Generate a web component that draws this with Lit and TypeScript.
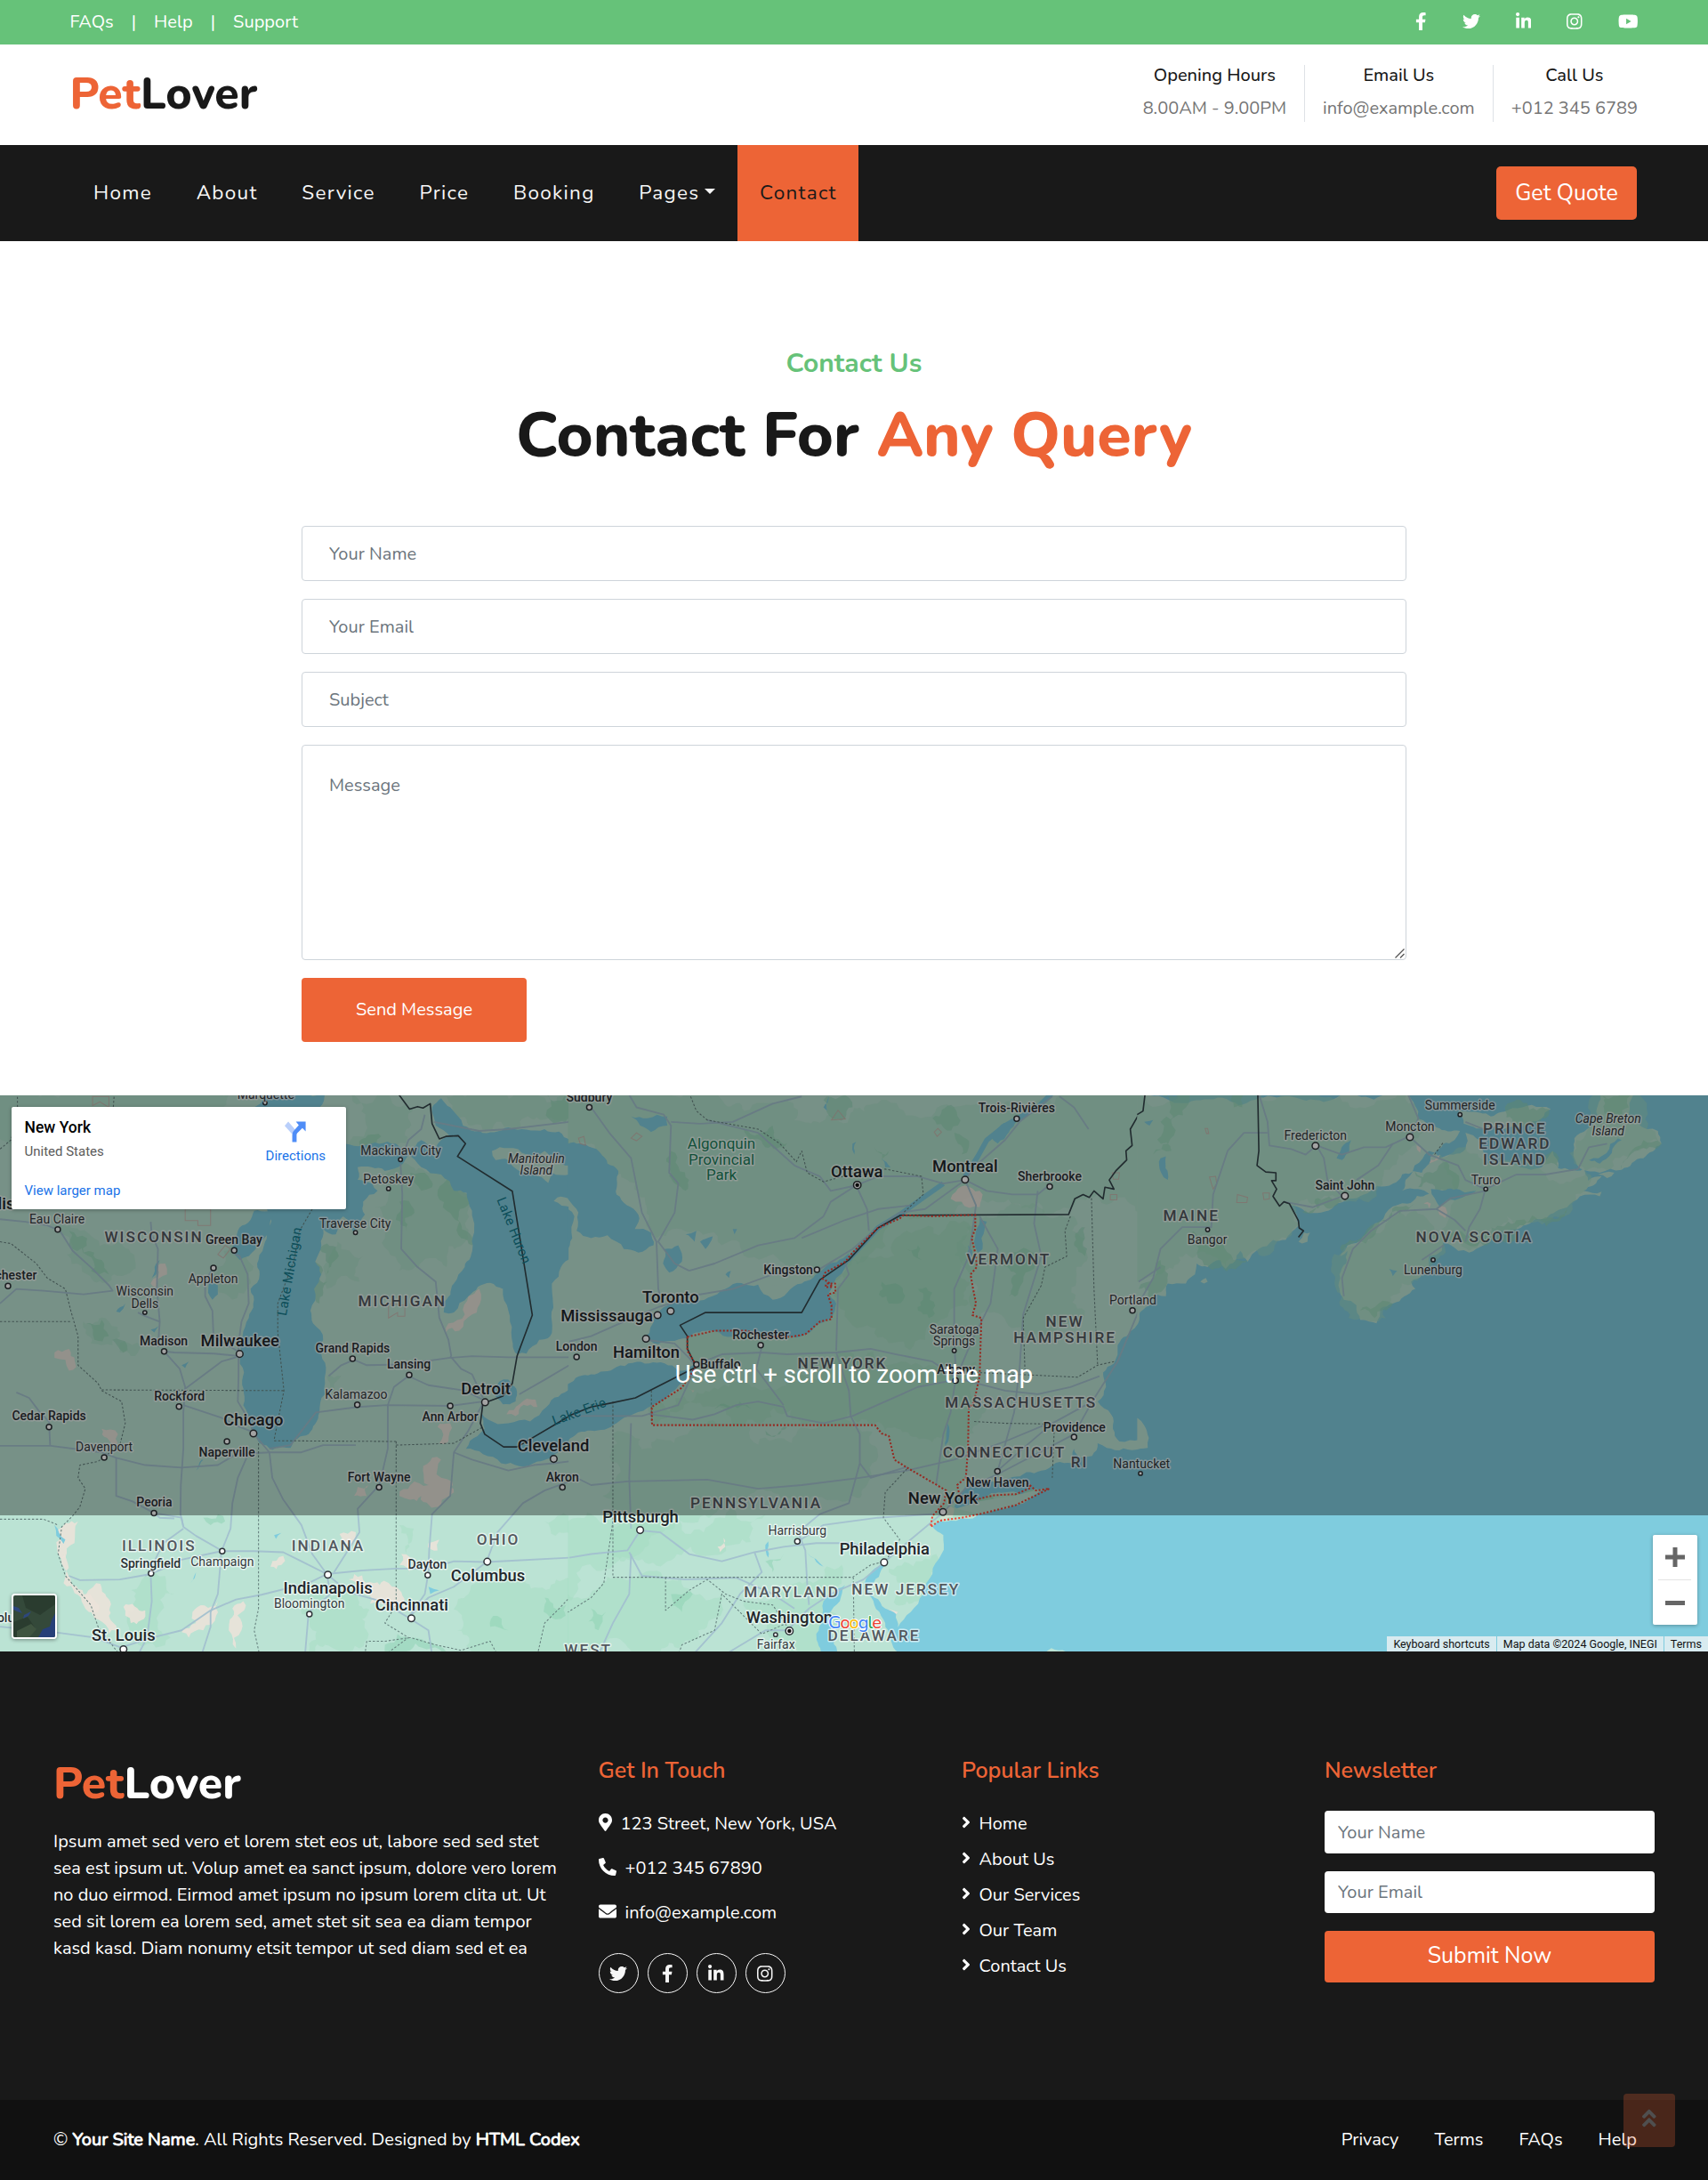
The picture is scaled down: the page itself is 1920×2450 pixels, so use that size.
import { LitElement, html, css, svg, nothing } from "lit";
import { customElement, property } from "lit/decorators.js";
import { classMap } from "lit/directives/class-map.js";

/* ---------- icons ---------- */

const ICONS: Record<string, [number, string]> = {
  facebook: [320, "M279.14 288l14.22-92.66h-88.91v-60.13c0-25.35 12.42-50.06 52.24-50.06h40.42V6.26S260.43 0 225.36 0c-73.22 0-121.08 44.38-121.08 124.72v70.62H22.89V288h81.39v224h100.17V288z"],
  twitter: [512, "M459.37 151.716c.325 4.548.325 9.097.325 13.645 0 138.72-105.583 298.558-298.558 298.558-59.452 0-114.68-17.219-161.137-47.106 8.447.974 16.568 1.299 25.34 1.299 49.055 0 94.213-16.568 130.274-44.832-46.132-.975-84.792-31.188-98.112-72.772 6.498.974 12.995 1.624 19.818 1.624 9.421 0 18.843-1.3 27.614-3.573-48.081-9.747-84.143-51.98-84.143-102.985v-1.299c13.969 7.797 30.214 12.67 47.431 13.319-28.264-18.843-46.781-51.005-46.781-87.391 0-19.492 5.197-37.36 14.294-52.954 51.655 63.675 129.3 105.258 216.365 109.807-1.624-7.797-2.599-15.918-2.599-24.04 0-57.828 46.782-104.934 104.934-104.934 30.213 0 57.502 12.67 76.67 33.137 23.715-4.548 46.456-13.32 66.599-25.34-7.798 24.366-24.366 44.833-46.132 57.827 21.117-2.273 41.584-8.122 60.426-16.243-14.292 20.791-32.161 39.308-52.628 54.253z"],
  linkedin: [448, "M100.28 448H7.4V148.9h92.88zM53.79 108.1C24.09 108.1 0 83.5 0 53.8a53.79 53.79 0 0 1 107.58 0c0 29.7-24.1 54.3-53.79 54.3zM447.9 448h-92.68V302.4c0-34.7-.7-79.2-48.29-79.2-48.29 0-55.69 37.7-55.69 76.7V448h-92.78V148.9h89.08v40.8h1.3c12.4-23.5 42.69-48.3 87.88-48.3 94 0 111.28 61.9 111.28 142.3V448z"],
  instagram: [448, "M224.1 141c-63.6 0-114.9 51.3-114.9 114.9s51.3 114.9 114.9 114.9S339 319.5 339 255.9 287.7 141 224.1 141zm0 189.6c-41.1 0-74.7-33.5-74.7-74.7s33.5-74.7 74.7-74.7 74.7 33.5 74.7 74.7-33.6 74.7-74.7 74.7zm146.4-194.3c0 14.9-12 26.8-26.8 26.8-14.9 0-26.8-12-26.8-26.8s12-26.8 26.8-26.8 26.8 12 26.8 26.8zm76.1 27.2c-1.7-35.9-9.9-67.7-36.2-93.9-26.2-26.2-58-34.4-93.9-36.2-37-2.1-147.9-2.1-184.9 0-35.8 1.7-67.6 9.9-93.9 36.1s-34.4 58-36.2 93.9c-2.1 37-2.1 147.9 0 184.9 1.7 35.9 9.9 67.7 36.2 93.9s58 34.4 93.9 36.2c37 2.1 147.9 2.1 184.9 0 35.9-1.7 67.7-9.9 93.9-36.2 26.2-26.2 34.4-58 36.2-93.9 2.1-37 2.1-147.8 0-184.8zM398.8 388c-7.8 19.6-22.9 34.7-42.6 42.6-29.5 11.7-99.5 9-132.1 9s-102.7 2.6-132.1-9c-19.6-7.8-34.7-22.9-42.6-42.6-11.7-29.5-9-99.5-9-132.1s-2.6-102.7 9-132.1c7.8-19.6 22.9-34.7 42.6-42.6 29.5-11.7 99.5-9 132.1-9s102.7-2.6 132.1 9c19.6 7.8 34.7 22.9 42.6 42.6 11.7 29.5 9 99.5 9 132.1s2.7 102.7-9 132.1z"],
  youtube: [576, "M549.655 124.083c-6.281-23.65-24.787-42.276-48.284-48.597C458.781 64 288 64 288 64S117.22 64 74.629 75.486c-23.497 6.322-42.003 24.947-48.284 48.597-11.412 42.867-11.412 132.305-11.412 132.305s0 89.438 11.412 132.305c6.281 23.65 24.787 41.5 48.284 47.821C117.22 448 288 448 288 448s170.78 0 213.371-11.486c23.497-6.321 42.003-24.171 48.284-47.821 11.412-42.867 11.412-132.305 11.412-132.305s0-89.438-11.412-132.305zm-317.51 213.508V175.185l142.739 81.205-142.739 81.201z"],
  pin: [384, "M172.268 501.67C26.97 291.031 0 269.413 0 192 0 85.961 85.961 0 192 0s192 85.961 192 192c0 77.413-26.97 99.031-172.268 309.67-9.535 13.774-29.93 13.773-39.464 0zM192 272c44.183 0 80-35.817 80-80s-35.817-80-80-80-80 35.817-80 80 35.817 80 80 80z"],
  phone: [512, "M493.4 24.6l-104-24c-11.3-2.6-22.9 3.3-27.5 13.9l-48 112c-4.2 9.8-1.4 21.3 6.9 28l60.6 49.6c-36 76.7-98.9 140.5-177.2 177.2l-49.6-60.6c-6.8-8.3-18.2-11.1-28-6.9l-112 48C3.9 366.5-2 378.1.6 389.4l24 104C27.1 504.2 36.7 512 48 512c256.1 0 464-207.5 464-464 0-11.2-7.7-20.9-18.6-23.4z"],
  mail: [512, "M502.3 190.8c3.9-3.1 9.7-.2 9.7 4.7V400c0 26.5-21.5 48-48 48H48c-26.5 0-48-21.5-48-48V195.6c0-5 5.7-7.8 9.7-4.7 22.4 17.4 52.1 39.5 154.1 113.6 21.1 15.4 56.7 47.8 92.2 47.6 35.7.3 72-32.8 92.3-47.6 102-74.1 131.6-96.3 154-113.7zM256 320c23.2.4 56.6-29.2 73.4-41.4 132.7-96.3 142.8-104.7 173.4-128.7 5.8-4.5 9.2-11.5 9.2-18.9v-19c0-26.5-21.5-48-48-48H48c-26.5 0-48 21.5-48 48v19c0 7.4 3.4 14.3 9.2 18.9 30.6 23.9 40.7 32.4 173.4 128.7 16.8 12.2 50.2 41.8 73.4 41.4z"],
  angle: [256, "M224.3 273l-136 136c-9.4 9.4-24.6 9.4-33.9 0l-22.6-22.6c-9.4-9.4-9.4-24.6 0-33.9l96.4-96.4-96.4-96.4c-9.4-9.4-9.4-24.6 0-33.9L54.3 103c9.4-9.4 24.6-9.4 33.9 0l136 136c9.5 9.4 9.5 24.6.1 34z"],
  up: [320, "M177 255.7l136 136c9.4 9.4 9.4 24.6 0 33.9l-22.6 22.6c-9.4 9.4-24.6 9.4-33.9 0L160 351.9l-96.4 96.4c-9.4 9.4-24.6 9.4-33.9 0L7 425.7c-9.4-9.4-9.4-24.6 0-33.9l136-136c9.4-9.5 24.6-9.5 34-.1zm-34-192L7 199.7c-9.4 9.4-9.4 24.6 0 33.9l22.6 22.6c9.4 9.4 24.6 9.4 33.9 0l96.4-96.4 96.4 96.4c9.4 9.4 24.6 9.4 33.9 0l22.6-22.6c9.4-9.4 9.4-24.6 0-33.9l-136-136c-9.2-9.4-24.4-9.4-33.8 0z"],
};

@customElement("fa-icon")
export class FaIcon extends LitElement {
  @property() name = "";
  static styles = css`
    :host { display: inline-flex; flex: none; }
    svg { display: block; height: 1em; fill: currentColor; }
  `;
  render() {
    const [w, d] = ICONS[this.name];
    return html`<svg viewBox="0 0 ${w} 512">${svg`<path d=${d} transform=${this.name === "phone" ? "matrix(-1 0 0 1 512 0)" : "matrix(1 0 0 1 0 0)"}></path>`}</svg>`;
  }
}

/* ---------- map ----------
   Geometry is stored per sheet; three sheets of 1568 units lie side by side,
   each of them 640 px wide. */

const K = 640 / 1568;
const OFF_Y = -11;

/* Breaks long straight edges into an irregular shoreline. */
function rough(points: string, amount = 0.16): string {
  const pts = points.split(" ").map((p) => p.split(",").map(Number));
  const out: number[][] = [];
  const noise = (a: number, b: number) => {
    const v = Math.sin(a * 12.9898 + b * 78.233) * 43758.5453;
    return (v - Math.floor(v)) * 2 - 1;
  };
  const split = (a: number[], b: number[]) => {
    const dx = b[0] - a[0], dy = b[1] - a[1], len = Math.hypot(dx, dy);
    const onEdge = (a[0] < 0 && b[0] < 0) || (a[0] >= 1568 && b[0] >= 1568);
    if (len < 16 || onEdge) { out.push(a); return; }
    const k = noise(a[0] + b[0], a[1] + b[1]) * amount * Math.min(1, 160 / len);
    const m = [(a[0] + b[0]) / 2 - dy * k, (a[1] + b[1]) / 2 + dx * k];
    split(a, m);
    split(m, b);
  };
  pts.forEach((p, i) => split(p, pts[(i + 1) % pts.length]));
  return out.map((p) => `${p[0].toFixed(1)},${p[1].toFixed(1)}`).join(" ");
}

const WATER: string[][] = [
  [
    // Lake Superior edge
    "760,20 895,20 880,60 800,60 740,75 700,60",
    // Lake Michigan
    "735,338 745,365 730,430 712,480 715,520 690,560 685,640 668,690 663,740 672,790 670,880 690,940 715,985 750,1003 800,998 850,960 880,900 895,850 897,790 885,740 890,700 862,655 855,620 865,560 885,520 868,485 885,440 890,395 925,410 945,360 975,405 1005,355 1000,320 1040,290 1025,270 985,260 985,225 1060,235 1110,215 1130,190 1090,160 1000,165 950,160 900,338",
    "640,445 655,400 700,345 775,338 745,370 715,430 685,470 660,480",
    // Lake Huron
    "1125,180 1160,225 1215,245 1250,290 1285,295 1300,345 1302,440 1280,500 1250,545 1217,598 1222,625 1250,625 1290,580 1350,543 1385,560 1400,620 1408,680 1425,740 1450,738 1485,700 1515,690 1520,650 1520,545 1545,500 1572,470 1572,335 1525,318 1535,308 1572,312 1572,150 1500,120 1400,115 1320,125 1275,110 1240,60 1215,35 1190,60 1200,110 1240,140 1200,170 1160,150",
    // Lake St. Clair
    "1355,835 1375,815 1400,810 1422,835 1420,870 1385,878 1368,860",
    // Lake Erie
    "1283,1000 1315,965 1335,945 1325,900 1345,920 1400,930 1460,925 1505,885 1572,830 1572,985 1540,1005 1480,1035 1430,1048 1380,1040 1330,1015",
    "575,545 600,550 600,575 585,590 573,570", "440,480 430,520 418,530 430,490", "500,770 520,760 510,778", "730,20 720,40 760,30",
    "150,1210 180,1250 175,1262 155,1240", "385,90 370,110 362,104", "230,110 240,95 236,120", "345,600 330,625 320,622", "540,1340 525,1370 535,1350", "1180,1380 1210,1390 1185,1400", "755,1238 775,1232 760,1248", "415,672 437,662 425,680", "540,1060 555,1030 560,1030",
  ],
  [
    // Georgian Bay
    "-4,160 60,170 85,185 105,215 135,235 130,300 190,355 180,395 225,405 232,440 190,460 150,450 105,412 60,420 20,400 25,350 -4,312",
    "-4,340 14,360 8,420 -4,460",
    // Lake Ontario
    "200,700 230,655 260,610 330,590 430,560 520,548 560,590 600,570 640,545 700,505 770,462 760,500 735,530 715,570 735,600 722,640 690,655 650,685 600,693 500,682 400,676 335,690 290,703 245,712",
    // Lake Erie
    "-4,822 60,795 130,775 220,765 300,785 345,768 330,805 280,845 230,880 175,905 130,930 60,950 -4,978",
    // Lake Simcoe, Nipissing
    "262,450 300,440 310,485 275,515 258,490", "170,85 215,90 270,85 270,110 225,128 195,110",
    // Champlain
    "1130,365 1150,375 1135,420 1138,450 1125,460 1120,400", "1098,440 1110,455 1108,495 1100,480", "1038,960 1042,930 1038,1010",
    // Atlantic
    "1572,640 1535,690 1510,715 1500,765 1470,790 1478,830 1455,870 1492,905 1497,945 1515,980 1572,975 1572,1000 1480,998 1455,985 1440,1020 1410,1025 1390,1000 1385,1040 1300,1060 1220,1078 1140,1085 1090,1105 1070,1140 1060,1160 1070,1166 1130,1140 1200,1120 1290,1110 1250,1150 1160,1175 1080,1192 1020,1200 1000,1215 1030,1238 1025,1290 1000,1345 975,1400 940,1450 905,1492 900,1455 870,1440 840,1410 820,1385 815,1395 840,1430 865,1470 880,1510 920,1575 1572,1575",
    "700,1420 740,1385 760,1375 745,1420 715,1455 720,1500 740,1575 690,1575 680,1510 700,1470", "835,1335 870,1318 820,1375 810,1390",
    "360,430 395,415 375,450", "320,410 350,400 345,430", "430,520 445,510 440,530", "450,395 455,410 462,395", "860,200 885,225 870,225", "780,160 790,155 785,190", "1160,140 1215,100 1235,95 1180,160", "700,60 715,30 710,70", "655,1285 700,1325 690,1320", "540,1265 548,1255 548,1300",
  ],
  [],
];

const OCEAN_LAND: string[] = [
  "-4,20 740,20 770,92 820,115 885,125 870,150 815,185 830,200 900,175 900,130 940,150 960,215 1050,225 1110,225 1140,180 1155,228 1225,228 1238,262 1275,250 1225,290 1275,292 1270,305 1215,305 1180,335 1060,385 990,400 950,440 910,460 880,455 840,430 835,455 800,470 800,495 750,540 762,560 700,600 665,615 655,655 635,650 610,645 600,605 565,590 553,560 553,520 575,455 555,470 575,440 650,380 740,325 800,298 770,285 725,290 735,260 760,232 700,270 620,300 540,330 460,348 415,330 445,385 420,405 405,425 370,425 330,450 300,485 280,455 240,505 225,480 190,500 160,490 155,520 130,545 80,545 75,580 50,575 20,610 -4,640",
  "1275,20 1365,20 1350,80 1400,120 1430,125 1440,160 1390,200 1330,232 1270,240 1215,228 1198,180 1200,145 1262,90",
  "880,70 940,75 970,85 1030,62 1135,65 1110,90 1060,110 990,118 930,118 895,105",
  "-4,915 15,935 28,970 25,998 -4,1000",
  "440,430 455,405 472,405 465,430 450,435", "170,540 185,530 190,540 180,545", "1265,245 1280,240 1310,240 1290,255",
];
const OCEAN_INLETS = ["760,220 800,180 815,185 800,215 780,240 755,235", "805,285 930,290 850,315 830,335 815,310", "1240,205 1320,145 1330,150 1270,215", "545,200 585,150 580,180 560,205", "60,200 75,195 80,260 62,240", "690,505 712,510 700,525", "15,100 40,95 30,110"];

const FOREST: string[][] = [
  [
    "-4,20 640,20 600,60 480,60 -4,130", "160,390 220,400 300,440 330,430 360,460 350,520 300,540 240,520 200,440", "230,650 290,640 330,680 310,715 250,710", "340,705 390,715 360,745 330,735", "1060,250 1180,240 1260,290 1290,340 1290,420 1230,500 1100,510 1060,420", "930,430 1000,470 990,540 900,560 890,500", "1230,30 1572,20 1572,115 1380,100 1300,110", "960,165 1130,100 1140,60 1060,20 960,20",
    "1290,1400 1440,1350 1572,1360 1572,1560 1300,1560 1260,1500", "850,1420 980,1400 1010,1500 960,1560 850,1560", "400,1350 480,1400 470,1520 380,1540", "1100,1210 1140,1220 1120,1290", "900,800 940,800 930,850 905,840", "600,500 660,440 690,490 680,560 640,590", "1500,1200 1572,1180 1572,1240 1530,1240",
  ],
  [
    "-4,20 1572,20 1572,350 920,355 780,480 600,500 420,440 240,420 190,300 60,160 -4,160", "820,470 930,400 1100,380 1100,600 980,700 820,660 740,600 750,520", "1120,360 1390,360 1420,620 1260,700 1130,640", "220,880 740,730 1120,760 1090,1000 840,930 230,930", "120,960 780,940 820,1100 620,1160 300,1180 120,1300", "-4,1200 200,1180 540,1180 420,1290 100,1330 -4,1420", "-4,1400 260,1360 420,1400 250,1560 -4,1570", "750,1320 640,1560 540,1570 480,1420", "880,1330 970,1310 1010,1290 960,1420 900,1430",
  ],
  [
    "-4,20 740,20 780,120 700,220 560,310 430,330 410,420 240,500 -4,540", "1270,20 1365,20 1400,120 1430,150 1300,230 1210,220 1205,150", "830,190 960,215 1230,235 1230,290 1060,385 910,455 840,420 860,330", "560,460 760,340 840,420 780,510 690,600 640,650 560,580",
  ],
];
const DEEP: string[][] = [
  ["190,400 240,420 230,460 280,480 300,520 250,510 200,450", "235,655 280,645 300,690 260,700", "1100,320 1140,340 1120,400 1090,370", "1130,240 1180,250 1190,280 1160,290", "880,450 930,460 900,520", "310,700 350,715 340,735", "990,165 1050,140 1040,190", "1500,1410 1560,1430 1530,1470", "1370,1460 1400,1500 1350,1490", "560,1190 600,1180 620,1200 580,1210", "1230,260 1290,310 1300,440 1270,420", "1572,20 1500,20 1540,100 1572,90", "850,555 885,520 868,485 880,600", "1060,1540 1140,1520 1230,1560 1060,1565"],
  ["860,540 910,550 920,590 880,600", "930,450 960,440 970,480", "960,560 1000,570 990,640 960,620", "480,120 560,110 600,160 540,170", "280,180 330,260 320,290 280,240", "1190,470 1290,460 1250,540 1210,580", "1390,440 1420,390 1420,470", "840,170 880,180 860,210", "1060,130 1100,170 1080,190", "540,1310 590,1290 560,1340", "540,950 600,940 580,960", "400,890 470,870 500,890", "60,1440 100,1450 80,1500", "280,1400 340,1400 310,1450", "700,40 780,60 760,90", "1000,90 1060,60 1070,110", "1280,1110 1220,1130 1100,1160 1140,1170"],
  ["60,20 140,20 130,60 60,100 90,180 40,190", "150,400 240,420 300,480 180,495", "0,560 60,480 70,560 40,590", "820,410 960,440 1060,385 1180,340 1050,370 930,410", "1100,225 1140,180 1155,228", "1275,20 1365,20 1350,60 1290,80", "1010,70 1130,65 1110,90", "555,465 640,385 760,325 740,345 600,430", "610,620 650,640 700,600 650,610", "265,20 290,20 285,60 262,60", "760,235 850,210 880,280 770,280", "1330,232 1440,160 1390,150 1350,190", "440,345 500,330 560,320 480,350"],
];
const SAND: string[][] = [
  ["1320,560 1325,590 1300,630 1265,675 1228,680 1235,655 1280,630 1290,580", "430,500 455,490 460,520 430,555 415,545", "150,735 190,725 195,745 210,775 190,785 180,755 150,750", "280,945 325,960 325,985 295,970", "1395,905 1475,865 1480,885 1420,910", "1165,1060 1190,1025 1215,1030 1215,1080 1245,1090 1250,1120 1215,1155 1160,1130 1100,1130 1130,1100 1180,1100", "985,1105 1015,1100 1010,1130 975,1130", "1205,940 1240,930 1235,980 1210,985", "180,1205 215,1200 205,1260 180,1300 160,1290 165,1250", "165,1290 180,1290 185,1340 230,1400 270,1450 230,1430 175,1370", "265,1370 290,1400 300,1460 320,1500 300,1510 270,1470 240,1420", "340,1435 400,1445 360,1480", "530,1450 600,1420 595,1460 560,1500 520,1520 500,1505 540,1480", "640,1440 670,1420 665,1500 650,1550 630,1500", "740,1300 780,1295 775,1320 745,1325", "935,1235 980,1230 975,1260 940,1260", "1105,1290 1130,1300 1125,1350 1100,1320", "1180,1260 1210,1250 1205,1280", "960,1360 1030,1370 1080,1380 1120,1440 1060,1430 1000,1390"],
  ["1055,300 1130,290 1130,335 1080,320 1050,312", "408,1270 425,1245 430,1270 415,1285", "325,835 345,840 340,845", "855,1455 905,1450 900,1470 880,1480", "1030,1170 1060,1165 1055,1190 1020,1195"],
  ["830,330 850,350 845,365 828,355", "785,325 805,325 800,338", "765,165 778,170 775,185", "785,205 830,190 815,205"],
];
const PARKS: string[][] = [
  ["255,30 300,30 300,60 275,45 255,55", "510,340 580,340 580,385 545,385 545,372 510,372", "1070,600 1115,605 1115,635 1095,635 1095,625 1070,640", "600,465 620,440 635,450 615,475"],
  ["740,68 760,92 722,95", "1005,128 1015,118 1025,128 1013,140", "1490,300 1508,300 1508,315 1490,315", "1495,240 1515,240 1513,258 1498,258", "25,145 40,140 45,165 30,160", "170,145 185,130 200,140 185,152"],
  ["195,252 212,250 215,270 205,285", "272,300 300,308 298,322 270,322", "342,296 360,296 360,312 345,314", "183,118 190,118 193,132 187,132"],
];

const ROADS: string[][] = [
  [
    "0,368 70,375 130,385 165,400 200,455 250,500 300,550 310,565 230,575 120,565 45,560 0,600", "415,375 418,410 435,450 432,560 440,650 435,720", "640,460 660,470 682,520 685,600 665,650 657,710 657,800 655,870 685,920 700,960 742,1010", "588,500 565,540 565,580 585,620 588,690 660,735",
    "440,650 400,635 380,625", "452,732 480,735 590,738 660,745", "452,732 495,780 510,830 505,900 505,1000 498,1100 497,1180 505,1215", "510,835 570,790 610,760 660,745", "505,880 610,915 660,940 700,955", "45,845 80,860 110,900 135,925 138,990", "0,992 140,992 280,1010 320,1025 400,1045 500,1052 600,1045 650,1015 742,1010", "320,1025 320,1130 365,1145 424,1177 500,1190 505,1215 540,1240 610,1280",
    "424,1177 440,1190 480,1192", "505,1220 450,1260 430,1300 415,1340 400,1350", "190,1350 220,1362 330,1360 415,1345 450,1330 480,1310 610,1282 700,1282 780,1285 830,1310 900,1345", "610,1282 600,1400 580,1450 580,1490 555,1568", "610,1282 635,1220 640,1150 655,1080 690,1000", "415,1345 418,1420 405,1520 380,1568", "340,1545 420,1520 500,1500 580,1445 650,1415 720,1402 850,1370 900,1345",
    "900,1345 860,1290 830,1210 780,1140 750,1080 742,1010 830,1010 890,990 980,990", "742,1000 800,990 870,900 985,885 1065,880 1240,882 1330,870", "905,800 940,770 975,755 1010,770 1110,768 1235,750 1300,745 1400,748 1568,748", "1125,800 1085,830 1068,880 1068,1000 1045,1100 985,1165 990,1230 920,1340", "1125,800 1180,825 1280,840 1330,865", "1240,745 1270,780 1300,795 1330,860", "1105,205 1125,150 1160,120 1170,80", "1103,215 1108,300 1105,450 1150,500 1200,540 1210,640 1235,700 1243,745",
    "900,1345 1000,1335 1090,1330 1180,1330 1250,1310 1340,1312 1568,1300", "900,1345 960,1395 1050,1420 1125,1465", "1125,1465 1170,1400 1180,1340 1182,1280 1190,1180 1240,1130 1250,1010 1290,950 1330,875", "1125,1465 1180,1410 1250,1380 1340,1312", "1340,1312 1370,1230 1440,1150 1500,1115 1568,1090", "1250,1010 1300,1030 1400,1060 1470,1045 1525,1040 1568,1035", "0,1490 150,1505 260,1520 340,1550", "1125,1465 1180,1500 1190,1568", "1195,100 1320,125 1400,120 1568,100", "1430,850 1500,810 1568,770", "900,1345 910,1400 850,1450 840,1568",
  ],
  [
    "60,60 110,130 170,200 200,350 240,430 245,560 255,600", "150,0 185,60 260,80 280,110 275,240 300,270 290,350 245,430 290,490 330,510", "280,100 360,105 450,100 560,50 640,30", "330,510 400,490 520,440 620,420 700,360 720,320 790,275", "0,705 60,690 150,650 245,610 280,600 330,580 450,560 560,520 690,505 780,450 850,390 910,350 980,340 1090,260", "790,275 850,250 960,250 1030,270 1090,260 1120,220 1200,150 1240,100 1330,30", "1090,260 1150,290 1220,300 1290,300 1320,275", "790,275 720,290 690,250 620,220 520,130 380,95", "790,275 820,340 825,400", "1090,260 1120,330 1110,400 1100,470 1060,560 1060,700 1065,800 1050,900 1030,960 1010,1100",
    "760,490 770,520 740,560 735,730", "210,700 290,710 330,750 345,770", "345,770 420,740 530,735 600,740 735,735 830,725 900,740 1000,760 1065,805", "735,735 770,840 775,910 800,960 800,1040 770,1150 690,1180 630,1230", "0,910 200,910 300,880 350,770", "220,905 340,920 400,905 460,880 520,870 590,885 600,910 700,930 780,910 870,870 960,830 1065,810", "530,720 515,780 590,880", "1065,805 1200,840 1290,850 1380,830 1460,800", "1065,805 1110,700 1160,600 1180,450 1130,360",
    "1290,290 1280,380 1300,470 1250,630 1240,780 1225,900 1180,1060", "1390,960 1440,870 1510,760 1568,620", "1180,1060 1260,990 1330,930 1440,870", "0,1070 60,1100 160,1090 380,1085 520,1110 640,1100 800,1080 930,1060 1060,1030 1200,980 1320,930", "800,1040 830,1080 930,1050", "170,930 165,1080 170,1220", "0,1300 60,1290 160,1280 195,1225 250,1230 330,1290 420,1310 510,1285 590,1270 680,1260 780,1260 870,1290", "630,1230 650,1280 655,1370 660,1430", "870,1310 810,1360 720,1400 660,1440 600,1500", "870,1310 940,1250 1030,1175", "630,1255 700,1210 850,1190 1000,1180", "165,1285 200,1350 320,1360 460,1355 560,1400 620,1440", "170,1290 165,1400 120,1480 80,1568", "510,1285 530,1340 470,1400 420,1480 340,1568", "600,1500 540,1500 440,1560", "1030,1175 1090,1110 1180,1070 1390,960", "1430,120 1390,60 1350,30", "640,420 760,370 850,340 940,330",
  ],
  [
    "330,20 355,100 360,165 420,175 460,190 490,165", "490,165 510,200 520,260 560,305 480,335 400,320", "490,165 560,190 620,170 680,170 745,140 800,190 880,220 900,260 955,285", "700,160 660,220 600,260", "740,20 770,90 750,140", "955,285 1040,245 1120,245 1210,230 1240,170 1290,160", "955,285 940,340 910,390 900,430", "955,290 860,310 820,340 720,345 640,400 590,450 560,530 565,580", "820,340 870,370 900,400", "355,130 290,130 245,180 205,300 200,390 120,390 60,450 40,530 0,600", "900,100 950,120 1010,110", "840,440 780,480", "0,540 60,500",
  ],
];

const STATES: string[][] = [
  ["48,20 48,90 30,150 0,175", "0,430 30,435 100,490 130,530 180,560 195,620 215,690 215,770 270,820 280,840 335,870 345,930 330,990 270,1035 220,1045 215,1080 235,1110 220,1160 200,1185 170,1215 160,1290 180,1350 250,1430 270,1490 330,1568", "0,650 195,650", "280,838 782,840", "860,340 825,400 810,480 765,600 765,680 782,840 755,975", "712,985 712,1440 700,1500 715,1568", "755,978 1091,980", "1091,980 1091,1430 1060,1480 1125,1520 1060,1568", "1091,990 1250,985 1330,940", "0,1194 120,1194 160,1210", "1005,1568 1010,1530 1060,1530 1130,1520 1200,1540 1270,1555 1350,1530 1370,1568", "1480,1568 1500,1480 1540,1440 1568,1410", "315,20 312,60"],
  ["330,20 350,70 380,95 520,120 580,160 625,210 640,180 655,240 700,265 790,240 870,230 970,250 975,300 920,350", "1438,310 1445,560 1455,770", "1380,360 1365,400 1370,470 1310,500 1300,550 1250,640 1255,790", "1120,790 1400,803 1455,770 1500,760", "1115,925 1200,930 1335,932 1335,960 1330,1080", "120,870 120,1354 780,1354 830,1320 870,1310", "226,840 226,930", "265,1354 265,1445 330,1390 380,1360 430,1400 480,1420 560,1430 600,1490", "782,1354 785,1568", "120,1200 95,1370 60,1410 -4,1450", "930,1055 870,1120 865,1190 910,1250 870,1310", "600,1480 530,1510 420,1400 400,1500 310,1540 300,1568"],
  ["815,190 840,155"],
];
const BORDERS: string[][] = [
  ["1095,20 1128,65 1150,58 1165,62 1185,50 1190,105 1210,147 1228,140 1262,138 1282,160 1260,195 1411,291 1466,632 1424,745 1411,820 1385,855 1330,875 1323,930 1335,960 1387,995 1424,995 1568,910"],
  ["-4,910 60,885 120,873 182,860 300,800 350,775 325,725 325,690 305,660 375,625 640,625 690,535 770,480 850,392 912,357 1375,355 1392,312 1415,300 1432,308 1445,290 1470,312 1475,280 1500,285 1487,260 1505,235 1535,205 1533,180 1550,165 1545,120 1568,80"],
  ["-4,80 12,70 18,20", "328,20 331,180 326,220 350,238 378,240 378,262 366,262 380,285 370,305 388,332 400,320 415,325 440,372 442,392 454,400 440,418"],
];
const NY = "325,692 400,675 490,675 530,690 610,692 650,685 690,650 722,643 722,605 712,575 733,570 732,545 708,545 705,555 725,555 712,540 697,532 705,515 760,485 780,460 850,392 910,366 920,357 1000,360 1118,356 1118,395 1108,420 1120,470 1122,500 1105,520 1112,560 1120,600 1110,632 1135,640 1133,700 1130,800 1115,870 1100,890 1098,1000 1092,1080 1068,1100 1075,1130 1120,1140 1170,1128 1230,1125 1270,1108 1262,1095 1285,1115 1322,1110 1230,1155 1130,1180 1080,1190 1020,1198 995,1215 1000,1185 1032,1150 1038,1115 930,1052 895,1030 880,965 860,958 842,935 228,935 227,885 310,832 335,795 350,770 325,730 325,692";

/* kind, sheet, centre x, baseline y, lines */
type Label = [string, number, number, number, string];
const LABELS: Label[] = [
  ["s", 0, 732, 36, "Marquette"], ["s", 0, 1104, 191, "Mackinaw City"], ["i", 0, 1477, 213, "Manitoulin|Island"], ["s", 0, 1070, 270, "Petoskey"], ["b", 0, 17, 340, "lis"],
  ["s", 0, 157, 379, "Eau Claire"], ["st", 0, 424, 432, "WISCONSIN"], ["m", 0, 644, 437, "Green Bay"], ["s", 0, 978, 392, "Traverse City"], ["m", 0, 44, 535, "chester"],
  ["s", 0, 587, 545, "Appleton"], ["s", 0, 399, 578, "Wisconsin|Dells"], ["st", 0, 1108, 607, "MICHIGAN"], ["m", 0, 451, 715, "Madison"], ["b", 0, 661, 718, "Milwaukee"],
  ["m", 0, 971, 735, "Grand Rapids"], ["m", 0, 1126, 780, "Lansing"], ["b", 0, 1338, 851, "Detroit"], ["m", 0, 494, 868, "Rockford"], ["s", 0, 981, 863, "Kalamazoo"],
  ["m", 0, 135, 922, "Cedar Rapids"], ["b", 0, 698, 937, "Chicago"], ["m", 0, 1240, 924, "Ann Arbor"], ["s", 0, 287, 1007, "Davenport"], ["m", 0, 625, 1022, "Naperville"],
  ["b", 0, 1524, 1007, "Cleveland"], ["m", 0, 1044, 1090, "Fort Wayne"], ["m", 0, 1549, 1090, "Akron"], ["m", 0, 425, 1160, "Peoria"], ["st", 0, 438, 1282, "ILLINOIS"],
  ["st", 0, 904, 1282, "INDIANA"], ["st", 0, 1372, 1265, "OHIO"], ["m", 0, 415, 1327, "Springfield"], ["s", 0, 612, 1324, "Champaign"], ["m", 0, 1177, 1331, "Dayton"],
  ["b", 0, 1344, 1364, "Columbus"], ["b", 0, 903, 1399, "Indianapolis"], ["s", 0, 852, 1439, "Bloomington"], ["b", 0, 1134, 1445, "Cincinnati"], ["b", 0, 340, 1530, "St. Louis"], ["m", 0, 16, 1477, "olu"],
  ["m", 1, 55, 44, "Sudbury"], ["m", 1, 1232, 74, "Trois-Rivières"], ["p", 1, 419, 174, "Algonquin|Provincial|Park"], ["b", 1, 792, 252, "Ottawa"], ["b", 1, 1090, 238, "Montreal"],
  ["m", 1, 1323, 262, "Sherbrooke"], ["m", 1, 603, 519, "Kingston"], ["st", 1, 1210, 493, "VERMONT"], ["b", 1, 279, 599, "Toronto"], ["b", 1, 103, 649, "Mississauga"],
  ["s", 1, 1552, 602, "Portland"], ["st", 1, 1365, 665, "NEW|HAMPSHIRE"], ["s", 1, 1060, 683, "Saratoga|Springs"], ["m", 1, 527, 699, "Rochester"], ["m", 1, 20, 731, "London"],
  ["b", 1, 212, 750, "Hamilton"], ["m", 1, 416, 780, "Buffalo"], ["st", 1, 752, 780, "NEW YORK"], ["m", 1, 1065, 794, "Albany"], ["st", 1, 1244, 888, "MASSACHUSETTS"],
  ["m", 1, 1391, 952, "Providence"], ["st", 1, 1198, 1023, "CONNECTICUT"], ["st", 1, 1405, 1050, "RI"], ["m", 1, 1179, 1104, "New Haven"], ["b", 1, 1029, 1152, "New York"],
  ["st", 1, 515, 1163, "PENNSYLVANIA"], ["b", 1, 196, 1203, "Pittsburgh"], ["s", 1, 628, 1238, "Harrisburg"], ["b", 1, 868, 1292, "Philadelphia"], ["st", 1, 613, 1408, "MARYLAND"],
  ["st", 1, 927, 1401, "NEW JERSEY"], ["b", 1, 606, 1479, "Washington"], ["st", 1, 839, 1528, "DELAWARE"], ["s", 1, 569, 1551, "Fairfax"], ["st", 1, 52, 1568, "WEST"],
  ["s", 2, 885, 66, "Summerside"], ["i", 2, 1293, 104, "Cape Breton|Island"], ["st", 2, 1036, 132, "PRINCE|EDWARD|ISLAND"], ["s", 2, 747, 125, "Moncton"], ["s", 2, 487, 149, "Fredericton"],
  ["m", 2, 568, 287, "Saint John"], ["s", 2, 956, 272, "Truro"], ["st", 2, 145, 372, "MAINE"], ["s", 2, 189, 436, "Bangor"], ["st", 2, 925, 432, "NOVA SCOTIA"], ["s", 2, 811, 519, "Lunenburg"], ["s", 2, 8, 1054, "Nantucket"],
];
const WATER_LABELS: [number, number, number, number, string][] = [
  [0, 800, 512, -80, "Lake Michigan"], [0, 1413, 400, 68, "Lake Huron"], [1, 28, 900, -20, "Lake Erie"],
];
/* sheet, x, y, size (1 small, 2 medium, 3 large, 4 capital) */
const DOTS: [number, number, number, number][] = [
  [0, 730, 48, 1], [0, 1103, 204, 1], [0, 1070, 284, 1], [0, 159, 396, 2], [0, 645, 454, 2], [0, 979, 405, 1], [0, 22, 552, 2], [0, 588, 502, 2], [0, 399, 625, 1], [0, 452, 732, 2], [0, 660, 739, 3], [0, 971, 752, 2], [0, 1127, 797, 2], [0, 1336, 872, 3], [0, 493, 884, 2], [0, 984, 879, 2], [0, 135, 940, 2], [0, 698, 958, 3], [0, 1240, 882, 2], [0, 287, 1024, 2], [0, 625, 980, 2], [0, 1525, 1028, 3], [0, 1044, 1106, 2], [0, 1549, 1106, 2], [0, 424, 1177, 2], [0, 612, 1282, 2], [0, 416, 1343, 2], [0, 903, 1347, 3], [0, 1178, 1348, 2], [0, 1342, 1311, 3], [0, 852, 1455, 2], [0, 1133, 1467, 3], [0, 340, 1552, 3],
  [1, 55, 60, 2], [1, 1232, 91, 2], [1, 793, 274, 4], [1, 1090, 259, 3], [1, 1323, 278, 2], [1, 682, 507, 2], [1, 279, 621, 3], [1, 243, 632, 3], [1, 211, 697, 3], [1, 20, 747, 2], [1, 527, 715, 2], [1, 350, 768, 2], [1, 1060, 730, 1], [1, 1064, 812, 2], [1, 1551, 619, 2], [1, 1390, 968, 2], [1, 1179, 1062, 2], [1, 1029, 1174, 3], [1, 195, 1224, 3], [1, 628, 1255, 2], [1, 867, 1313, 3], [1, 606, 1502, 4], [1, 568, 1512, 1],
  [2, 885, 80, 1], [2, 747, 142, 3], [2, 487, 166, 3], [2, 568, 304, 3], [2, 956, 285, 1], [2, 190, 397, 1], [2, 811, 480, 1], [2, 5, 1068, 1],
];
const LINE: Record<string, number> = { i: 13.5, s: 13.7, p: 17.5, st: 17.5, b: 17, m: 14 };

@customElement("area-map")
export class AreaMap extends LitElement {
  static styles = css`
    :host { display: block; position: relative; height: 625px; overflow: hidden; background: #7fccde; font-family: Roboto, "Liberation Sans", sans-serif; }
    .canvas { display: block; }
    .land { fill: #bbe3d4; }
    .water { fill: #7fccde; }
    .river { fill: none; stroke: #7fccde; stroke-width: 14; stroke-linejoin: round; }
    .forest { fill: #a5dbc2; opacity: .45; }
    .deep { fill: #8fd3b4; opacity: .55; }
    .sand { fill: #ebe2d9; opacity: .9; }
    .ny { fill: #8fdcae; opacity: .25; }
    .park { fill: none; stroke: #cfa9a5; stroke-width: 2.5; opacity: .7; }
    .road { fill: none; stroke: #a2c0cf; stroke-width: 4.5; stroke-linejoin: round; opacity: .95; }
    .state { fill: none; stroke: #66807e; stroke-width: 2.6; stroke-dasharray: 6 5; stroke-linejoin: round; }
    .border { fill: none; stroke: #34444a; stroke-width: 4; stroke-linejoin: round; }
    .nyline { fill: none; stroke: #ea4335; stroke-width: 5; stroke-dasharray: 5 5; stroke-linejoin: round; }
    .dot { fill: #fff; stroke: #2e3338; stroke-width: 1.5; }
    .core { fill: #111; }
    .lb { text-anchor: middle; paint-order: stroke; stroke: rgba(255, 255, 255, .6); stroke-width: 3px; stroke-linejoin: round; fill: #353a3e; font-weight: 400; font-size: 14px; }
    .m { font-weight: 500; fill: #2b3035; }
    .b { font-weight: 500; font-size: 18.4px; fill: #22272b; }
    .st { font-weight: 500; font-size: 17.2px; letter-spacing: 2px; fill: #52585e; }
    .i { font-style: italic; }
    .p { font-size: 17px; fill: #1b7f5c; }
    .wl { fill: #137a8c; font-size: 15px; letter-spacing: .3px; text-anchor: middle; dominant-baseline: middle; }
    .dim { position: absolute; left: 0; top: 0; right: 0; height: 472px; background: rgba(0, 0, 0, .36); display: flex; align-items: center; justify-content: center; color: #fff; font-size: 27.5px; }
    .hint { margin-top: 156px; }
    .card { position: absolute; left: 13px; top: 13px; width: 376px; height: 115px; box-sizing: border-box; background: #fff; border-radius: 2px; box-shadow: 0 1px 4px rgba(0, 0, 0, .3); padding: 13px 23px 0 14.500px; display: flex; justify-content: space-between; }
    .place { display: flex; flex-direction: column; }
    .name { font-size: 17.5px; font-weight: 500; line-height: 20px; color: #000; }
    .sub { font-size: 15px; line-height: 18px; color: #5b5b5b; margin-top: 8px; }
    .blue { font-size: 15px; line-height: 18px; color: #1a73e8; }
    .more { margin-top: 26px; }
    .dir { display: flex; flex-direction: column; align-items: center; gap: 6px; padding-top: 3px; }
    .sat { position: absolute; left: 13px; bottom: 14px; width: 47px; height: 47px; border: 2px solid #fff; border-radius: 4px; box-shadow: 0 1px 4px rgba(0, 0, 0, .4); overflow: hidden; }
    .zoom { position: absolute; right: 12px; top: 494px; width: 50px; height: 101px; background: #fff; box-shadow: 0 1px 4px rgba(0, 0, 0, .3); border-radius: 2px; }
    .google { position: absolute; left: 931px; bottom: 17px; font: 500 20px/30px Nunito, sans-serif; letter-spacing: -1.1px; paint-order: stroke; -webkit-text-stroke: 2px #fff; }
    .g1 { color: #4285f4; } .g2 { color: #ea4335; } .g3 { color: #fbbc05; } .g4 { color: #34a853; }
    .legal { position: absolute; right: 0; bottom: 0; display: flex; gap: 1px; font-size: 12.5px; line-height: 17px; color: #111; }
    .legal span { background: rgba(245, 245, 245, .75); padding: 0 7px; }
  `;

  private polys(list: string[], cls: string) {
    return list.map((p) => svg`<polygon class=${cls} points=${cls === "park" ? p : rough(p, cls === "water" || cls === "land" ? 0.14 : 0.32)}></polygon>`);
  }
  private lines(list: string[], cls: string) {
    return list.map((p) => svg`<polyline class=${cls} points=${p}></polyline>`);
  }
  private at(s: number, x: number, y: number) {
    return [s * 640 + x * K, y * K + OFF_Y];
  }

  render() {
    const sheets = [0, 1, 2].map((s) => svg`<g transform="translate(${s * 640} ${OFF_Y}) scale(${K})">
      ${s < 2 ? svg`<rect class="land" x="-2" y="0" width="1572" height="1568"></rect>` : this.polys(OCEAN_LAND, "land")}
      ${this.polys(FOREST[s], "forest")}${this.polys(DEEP[s], "deep")}${this.polys(SAND[s], "sand")}
      ${s === 1 ? svg`<polygon class="ny" points=${NY}></polygon>` : nothing}
      ${this.polys(WATER[s], "water")}
      ${s === 0 ? this.polys(["1355,180 1400,172 1450,190 1500,180 1568,220 1568,245 1520,240 1510,268 1470,240 1430,235 1400,205 1365,205"], "land") : nothing}
      ${s === 1 ? svg`<polyline class="river" points="690,520 770,478 850,392 912,354 980,305 1030,270"></polyline><polyline class="river" points="1090,250 1125,195 1150,150 1200,110 1290,60 1330,20"></polyline>
        <polygon class="land" points="1065,1165 1130,1145 1230,1128 1310,1108 1250,1150 1130,1180"></polygon>${this.polys(["530,560 580,548 610,560 580,575 545,572"], "land")}` : nothing}
      ${s === 2 ? this.polys(OCEAN_INLETS, "water") : nothing}
      ${this.polys(PARKS[s], "park")}${this.lines(ROADS[s], "road")}${this.lines(STATES[s], "state")}${this.lines(BORDERS[s], "border")}
      ${s === 1 ? svg`<polyline class="nyline" points=${NY}></polyline>` : nothing}
    </g>`);
    const dots = DOTS.map(([s, x, y, k]) => {
      const [cx, cy] = this.at(s, x, y);
      return svg`<circle class="dot" cx=${cx} cy=${cy} r=${[0, 2.2, 3, 3.8, 4.2][k]}></circle>${k === 4 ? svg`<circle class="core" cx=${cx} cy=${cy} r="2.2"></circle>` : nothing}`;
    });
    const labels = LABELS.map(([k, s, x, y, t]) => {
      const [px, py] = this.at(s, x, y);
      return t.split("|").map((line, i) => svg`<text class="lb ${k}" x=${px} y=${py + i * LINE[k]}>${line}</text>`);
    });
    const wl = WATER_LABELS.map(([s, x, y, r, t]) => {
      const [px, py] = this.at(s, x, y);
      return svg`<text class="wl" transform="translate(${px} ${py}) rotate(${r})">${t}</text>`;
    });
    return html`
      <svg class="canvas" width="1920" height="625" viewBox="0 0 1920 625">${sheets}${wl}${dots}${labels}</svg>
      <div class="google"><span class="g1">G</span><span class="g2">o</span><span class="g3">o</span><span class="g1">g</span><span class="g4">l</span><span class="g2">e</span></div>
      <div class="dim"><span class="hint">Use ctrl + scroll to zoom the map</span></div>
      <div class="card">
        <div class="place"><span class="name">New York</span><span class="sub">United States</span><span class="blue more">View larger map</span></div>
        <div class="dir">
          <svg width="24" height="24" viewBox="785 99 59 59"><path fill="#b9cffb" d="M795 100l-10 12 20 22 12-8z"></path><path fill="#4f8df7" d="M816 100h27v27l-9-9-13 13c-2 2-3 4-3 7v19h-12v-20c0-5 2-9 5-12l13-15z"></path></svg>
          <span class="blue">Directions</span>
        </div>
      </div>
      <div class="sat"><svg width="47" height="47" viewBox="0 0 47 47"><rect width="47" height="47" fill="#34493a"></rect><path fill="#2a3c2f" d="M10 0h37v10L30 22 14 14zM0 30l16-6 8 12-12 11H0z"></path><path fill="#3f5440" d="M4 40l16-8 6 6-8 9H4z"></path><path fill="#2d477d" d="M0 12l6 2 4 6-6-2-4-2zM12 22l8-4-3 5-6 3z"></path><path fill="#263f78" d="M47 20l-4 8-2 7-8 3-5 9h19z"></path></svg></div>
      <div class="zoom"><svg width="50" height="101" viewBox="0 0 50 101"><path fill="#666" d="M22.5 14h5v8.500h8.500v5h-8.500v8.500h-5v-8.500H14v-5h8.500zM14 74h22v5H14z"></path><path fill="#e3e3e3" d="M6 50h37v1H6z"></path></svg></div>
      <div class="legal"><span>Keyboard shortcuts</span><span>Map data ©2024 Google, INEGI</span><span>Terms</span></div>`;
  }
}

/* ---------- page ---------- */

const NAV = ["Home", "About", "Service", "Price", "Booking", "Pages", "Contact"];

@customElement("app-root")
export class AppRoot extends LitElement {
  static styles = css`
    :host { display: block; position: relative; width: 1920px; height: 2450px; overflow: hidden; background: #fff; color: #757575; font: 400 20px/30px Nunito, "Open Sans", sans-serif; }
    * { box-sizing: border-box; }
    .top { display: flex; justify-content: space-between; height: 50px; background: #66c279; color: #fff; padding: 10px 79px 0 78.500px; }
    .links { display: flex; gap: 20px; letter-spacing: .04px; }
    .social { display: flex; gap: 40px; padding-top: 4px; }
    .head { display: flex; justify-content: space-between; align-items: center; height: 113px; padding: 0 79px 0 78.500px; }
    .logo { font-size: 50px; font-weight: 800; line-height: 60px; color: #191919; margin-top: -2px; }
    .pet { color: #ed6436; }
    .info { display: flex; margin-top: -3px; }
    .cell { display: flex; flex-direction: column; gap: 10px; align-items: center; height: 64px; padding: 0 20px; border-right: 1px solid #dee2e6; }
    .cell:last-child { border: 0; padding-right: 0; }
    .cap { line-height: 24px; color: #191919; font-weight: 500; }
    .nav { display: flex; justify-content: space-between; height: 108px; background: #191919; padding: 0 80px 0 80px; }
    .items { display: flex; }
    .item { display: flex; align-items: center; padding: 0 24.700px 0 25px; font-size: 22.500px; letter-spacing: 1.28px; color: #f6f6f6; }
    .item.on { background: #ed6436; color: #191919; padding: 0 24.300px 0 25px; }
    .caret { border: 6.500px solid transparent; border-top-color: #f6f6f6; border-bottom: 0; margin: 0 0 5px 6px; }
    .quote { align-self: center; display: flex; align-items: center; justify-content: center; height: 60px; width: 158px; border-radius: 5px; background: #ed6436; color: #fff; font-size: 25px; }
    .contact { display: flex; flex-direction: column; align-items: center; height: 960px; padding-top: 120px; }
    .kicker { font-size: 30px; line-height: 36px; font-weight: 700; color: #66c279; }
    .title { font-size: 70px; line-height: 84px; font-weight: 800; color: #191919; margin: 20px 0 60px; }
    .form { display: flex; flex-direction: column; gap: 20px; width: 1242px; }
    .field { display: block; width: 100%; height: 62px; border: 1px solid #ced4da; border-radius: 4px; padding: 0 30px; font: inherit; color: #495057; background: #fff; outline: 0; }
    .field::placeholder { color: #6c757d; opacity: 1; }
    .area { height: 242px; padding: 30px; resize: none; }
    .grow { position: relative; }
    .grip { position: absolute; right: 2px; bottom: 2px; }
    .send { width: 253px; height: 72px; border-radius: 4px; background: #ed6436; color: #fff; display: flex; align-items: center; justify-content: center; }
    .foot { display: grid; grid-template-columns: 612px 408px 408px 372px; height: 504px; background: #191919; color: #fff; padding: 119px 0 0 60px; }
    .foot .logo { color: #fff; margin: 0 0 20px; }
    .h5 { font-size: 25px; line-height: 30px; font-weight: 600; color: #ed6436; margin-bottom: 30px; }
    .col { display: flex; flex-direction: column; }
    .c2 { padding-left: .5px; }
    .c3 { padding-left: 1px; }
    .para { white-space: pre-line; }
    .touch { display: flex; gap: 10px; height: 30px; margin-bottom: 20px; }
    .touch fa-icon { margin-top: 3px; }
    .rings { display: flex; gap: 10px; margin-top: 10px; }
    .ring { display: flex; align-items: center; justify-content: center; width: 45px; height: 45px; border: 1px solid #f6f6f6; border-radius: 50%; color: #f6f6f6; }
    .pop { display: flex; gap: 9.500px; height: 40px; }
    .pop fa-icon { margin-top: 3px; }
    .news { display: flex; flex-direction: column; }
    .inp { height: 48px; border: 0; border-radius: 4px; padding: 0 15px; font: inherit; background: #fff; margin-bottom: 20px; outline: 0; }
    .inp2 { height: 47px; }
    .inp::placeholder { color: #6c757d; opacity: 1; }
    .submit { height: 58px; border-radius: 4px; background: #ed6436; color: #fff; font-size: 25px; display: flex; align-items: center; justify-content: center; padding-bottom: 2px; }
    .base { display: flex; justify-content: space-between; align-items: center; height: 90px; background: #111; color: #fff; padding: 0 80px 0 60px; }
    .strong { -webkit-text-stroke: .9px #fff; }
    .right { display: flex; gap: 40px; }
    .up { position: absolute; left: 1825px; top: 2353px; width: 58px; height: 60px; border-radius: 4px; background: rgba(237, 100, 54, .26); color: #4f4f4f; font-size: 25px; display: flex; align-items: center; justify-content: center; padding-bottom: 5px; }
  `;

  render() {
    return html`
      <div class="top">
        <div class="links"><span>FAQs</span><span>|</span><span>Help</span><span>|</span><span>Support</span></div>
        <div class="social">${["facebook", "twitter", "linkedin", "instagram", "youtube"].map((n) => html`<fa-icon name=${n}></fa-icon>`)}</div>
      </div>
      <div class="head">
        <div class="logo"><span class="pet">Pet</span>Lover</div>
        <div class="info">
          <div class="cell"><span class="cap">Opening Hours</span><span>8.00AM - 9.00PM</span></div>
          <div class="cell"><span class="cap">Email Us</span><span>info@example.com</span></div>
          <div class="cell"><span class="cap">Call Us</span><span>+012 345 6789</span></div>
        </div>
      </div>
      <div class="nav">
        <div class="items">${NAV.map((n) => html`<span class=${classMap({ item: true, on: n === "Contact" })}>${n}${n === "Pages" ? html`<i class="caret"></i>` : nothing}</span>`)}</div>
        <span class="quote">Get Quote</span>
      </div>
      <div class="contact">
        <div class="kicker">Contact Us</div>
        <div class="title">Contact For <span class="pet">Any Query</span></div>
        <div class="form">
          <input class="field" placeholder="Your Name">
          <input class="field" placeholder="Your Email">
          <input class="field" placeholder="Subject">
          <div class="grow">
            <textarea class="field area" placeholder="Message"></textarea>
            <svg class="grip" width="11" height="11" viewBox="0 0 11 11"><path d="M.5 10.500L10.500.5M6 10.500L10.500 6" stroke="#555" stroke-width="1.300" fill="none"></path></svg>
          </div>
          <span class="send">Send Message</span>
        </div>
      </div>
      <area-map></area-map>
      <div class="foot">
        <div class="col">
          <div class="logo"><span class="pet">Pet</span>Lover</div>
          <div class="para">${["Ipsum amet sed vero et lorem stet eos ut, labore sed sed stet", "sea est ipsum ut. Volup amet ea sanct ipsum, dolore vero lorem", "no duo eirmod. Eirmod amet ipsum no ipsum lorem clita ut. Ut", "sed sit lorem ea lorem sed, amet stet sit sea ea diam tempor", "kasd kasd. Diam nonumy etsit tempor ut sed diam sed et ea"].join("\n")}</div>
        </div>
        <div class="col c2">
          <div class="h5">Get In Touch</div>
          <div class="touch"><fa-icon name="pin"></fa-icon><span>123 Street, New York, USA</span></div>
          <div class="touch"><fa-icon name="phone"></fa-icon><span>+012 345 67890</span></div>
          <div class="touch"><fa-icon name="mail"></fa-icon><span>info@example.com</span></div>
          <div class="rings">${["twitter", "facebook", "linkedin", "instagram"].map((n) => html`<span class="ring"><fa-icon name=${n}></fa-icon></span>`)}</div>
        </div>
        <div class="col c3">
          <div class="h5">Popular Links</div>
          ${["Home", "About Us", "Our Services", "Our Team", "Contact Us"].map((n) => html`<div class="pop"><fa-icon name="angle"></fa-icon><span>${n}</span></div>`)}
        </div>
        <div class="col c3">
          <div class="h5">Newsletter</div>
          <div class="news">
            <input class="inp" placeholder="Your Name">
            <input class="inp inp2" placeholder="Your Email">
            <span class="submit">Submit Now</span>
          </div>
        </div>
      </div>
      <div class="base">
        <span>© <span class="strong">Your Site Name</span>. All Rights Reserved. Designed by <span class="strong">HTML Codex</span></span>
        <div class="right"><span>Privacy</span><span>Terms</span><span>FAQs</span><span>Help</span></div>
      </div>
      <div class="up"><fa-icon name="up"></fa-icon></div>`;
  }
}
